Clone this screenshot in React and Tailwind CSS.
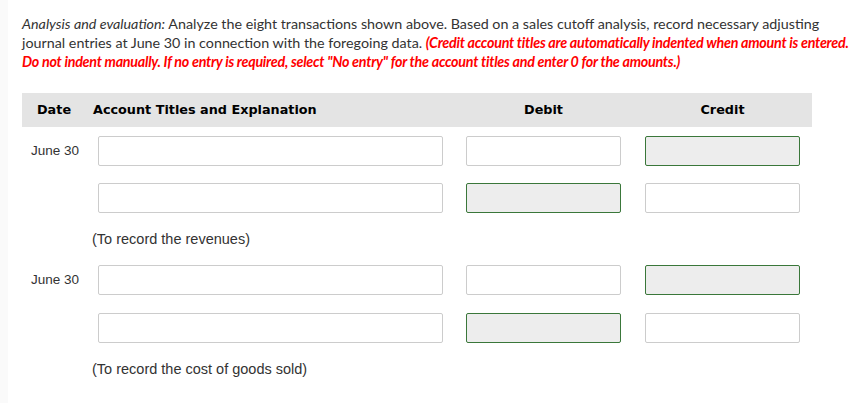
import React from "react";

function Inp({ green }) {
  return (
    <div
      className={
        green
          ? "h-[30px] w-full rounded-[2px] border border-[#3a773a] bg-[#ededed]"
          : "h-[30px] w-full rounded-[2px] border border-[#cccccc] bg-white"
      }
    />
  );
}

function Row({ date, debitGreen, creditGreen, className }) {
  return (
    <div className={"flex items-center " + (className || "")}>
      <div className="w-[76px] pl-[9px] text-[13.5px] leading-[16px] text-[#333]" style={{ fontFamily: "'Liberation Sans', Arial, sans-serif" }}>
        {date}
      </div>
      <div className="w-[345px]"><Inp /></div>
      <div className="ml-[23px] w-[155px]"><Inp green={debitGreen} /></div>
      <div className="ml-[24px] w-[155px]"><Inp green={creditGreen} /></div>
    </div>
  );
}

function Note({ children, className }) {
  return (
    <div
      className={"pl-[70px] text-[14.5px] leading-[16px] text-[#333] " + (className || "")}
      style={{ fontFamily: "'Liberation Sans', Arial, sans-serif" }}
    >
      {children}
    </div>
  );
}

export default function App() {
  return (
    <div className="flex h-[403px] w-[862px] bg-white overflow-hidden">
      <div className="w-[8px] shrink-0 bg-[#fafafa]" />
      <div className="flex-1 pl-[14px] pt-[14px]">
        <p className="pr-[2px] text-[14.3px] leading-[19px] text-[#333]" style={{ fontFamily: "Lato, sans-serif" }}>
          <i>Analysis and evaluation:</i> Analyze the eight transactions shown above. Based on a sales cutoff analysis, record necessary adjusting journal entries at June 30 in connection with the foregoing data.{" "}
          <b className="italic tracking-[-0.25px] text-[#ff0000]">
            (Credit account titles are automatically indented when amount is entered. Do not indent manually. If no entry is required, select "No entry" for the account titles and enter 0 for the amounts.)
          </b>
        </p>
        <div
          className="mt-[22px] flex h-[34px] w-[790px] items-center bg-[#e4e4e4] text-[12.8px] font-bold text-black"
          style={{ fontFamily: "'DejaVu Sans', Verdana, sans-serif" }}
        >
          <div className="w-[71px] pl-[15px]">Date</div>
          <div className="w-[350px]">Account Titles and Explanation</div>
          <div className="ml-[23px] w-[155px] text-center">Debit</div>
          <div className="ml-[24px] w-[155px] text-center">Credit</div>
        </div>
        <Row className="mt-[9px]" date="June 30" creditGreen />
        <Row className="mt-[17px]" debitGreen />
        <Note className="mt-[18px]">(To record the revenues)</Note>
        <Row className="mt-[18px]" date="June 30" creditGreen />
        <Row className="mt-[18px]" debitGreen />
        <Note className="mt-[18px]">(To record the cost of goods sold)</Note>
      </div>
    </div>
  );
}
